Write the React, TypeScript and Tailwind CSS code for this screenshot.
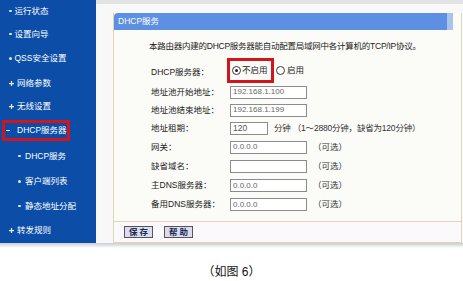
import React from "react";

const FONT = { fontFamily: '"Liberation Sans", "Noto Sans CJK SC", sans-serif' };

function Bullet({ kind }: { kind: "dot" | "plus" | "minus" | "sub" }) {
  if (kind === "plus")
    return (
      <svg width="5" height="5" viewBox="0 0 5 5" className="shrink-0">
        <rect x="0" y="2" width="5" height="1.2" fill="#e8eef8" />
        <rect x="1.9" y="0" width="1.2" height="5" fill="#e8eef8" />
      </svg>
    );
  if (kind === "minus")
    return <span className="block w-[4px] h-[1.5px] bg-white shrink-0" />;
  return <span className="block w-[2.5px] h-[2.5px] bg-[#dfe7f5] rounded-full shrink-0" />;
}

function NavItem({
  label,
  h,
  kind,
  sub,
}: {
  label: string;
  h: string;
  kind: "dot" | "plus";
  sub?: boolean;
}) {
  return (
    <div className={`flex items-center ${h} ${sub ? "pl-[18px]" : "pl-[9px]"}`}>
      <Bullet kind={kind} />
      <span className={`${sub ? "ml-[4.5px]" : "ml-[3px]"} text-[8.5px] leading-none text-white`}>{label}</span>
    </div>
  );
}

function Radio({ checked }: { checked?: boolean }) {
  return (
    <span className="w-[9px] h-[9px] rounded-full border border-[#3a3a3a] bg-white flex items-center justify-center shrink-0">
      {checked && <span className="w-[3px] h-[3px] rounded-full bg-[#222]" />}
    </span>
  );
}

function Field({ label, value, h, note }: { label: string; value: string; h: string; note?: boolean }) {
  return (
    <div className={`flex items-center ${h}`}>
      <span className="w-[79px] shrink-0 text-[8.5px] leading-none text-[#222]">{label}</span>
      <span className="w-[77px] h-[13px] border border-[#8c8c8c] bg-white pl-[2px] flex items-center text-[8px] text-[#666] leading-none shrink-0">
        {value}
      </span>
      {note && <span className="ml-[6px] text-[8.5px] leading-none text-[#333]">（可选）</span>}
    </div>
  );
}

export default function App() {
  return (
    <div className="w-[463px] h-[281px] bg-white overflow-hidden flex flex-col" style={FONT}>
      <div className="flex h-[243px] shrink-0">
        {/* Sidebar */}
        <aside className="w-[96px] bg-[#0c4ea7] flex flex-col shrink-0">
          <NavItem label="运行状态" h="h-[22px]" kind="dot" />
          <NavItem label="设置向导" h="h-[24px]" kind="dot" />
          <NavItem label="QSS安全设置" h="h-[25px]" kind="dot" />
          <NavItem label="网络参数" h="h-[24px]" kind="plus" />
          <NavItem label="无线设置" h="h-[23px]" kind="plus" />
          <div className="h-[25px] flex items-center pl-[2px]">
            <div className="h-[21px] w-[68px] border-[3px] border-[#d3141c] flex items-center pl-[1px]">
              <Bullet kind="minus" />
              <span className="ml-[7px] text-[8.5px] leading-none text-white">DHCP服务器</span>
            </div>
          </div>
          <NavItem label="DHCP服务" h="h-[26px]" kind="dot" sub />
          <NavItem label="客户端列表" h="h-[25px]" kind="dot" sub />
          <NavItem label="静态地址分配" h="h-[24px]" kind="dot" sub />
          <NavItem label="转发规则" h="h-[25px]" kind="plus" />
        </aside>

        {/* Main */}
        <div className="flex-1 flex flex-col bg-[#f8f8f8]">
          <div className="h-[4px] bg-[#e3e3e3] shrink-0" />
          <div className="flex-1 flex pl-[17px] pt-[9px] pr-[1px]">
            <div className="flex-1 flex flex-col border-l border-r border-b border-[#e2d5b3] bg-[#fbfbf8]">
              <div className="flex h-[17px] shrink-0">
                <div className="flex-1 bg-[#5d8fe2] rounded-tl-[4px] flex items-center pl-[4px] text-[8.5px] leading-none text-white">
                  DHCP服务
                </div>
                <div className="w-[6px] bg-[#a9c3ec]" />
                <div className="w-[8px]" />
              </div>
              <div className="flex-1 flex flex-col pl-[35px]">
                <div className="mt-[10px] h-[12px] flex items-center text-[8.5px] leading-none text-[#222] whitespace-nowrap tracking-[-0.25px]">
                  本路由器内建的DHCP服务器能自动配置局域网中各计算机的TCP/IP协议。
                </div>
                <div className="mt-[6px] h-[25px] flex items-center pl-[2px]">
                  <span className="w-[76px] shrink-0 text-[8.5px] leading-none text-[#222] pt-[3px]">DHCP服务器：</span>
                  <div className="h-[25px] w-[47px] border-[3px] border-[#d3141c] flex items-center pl-[2px] shrink-0">
                    <Radio checked />
                    <span className="ml-[1px] text-[8.5px] leading-none text-[#222]">不启用</span>
                  </div>
                  <span className="ml-[2px]">
                    <Radio />
                  </span>
                  <span className="ml-[2px] text-[8.5px] leading-none text-[#222]">启用</span>
                </div>
                <div className="pl-[2px] flex flex-col">
                  <Field label="地址池开始地址：" value="192.168.1.100" h="h-[18px]" />
                  <Field label="地址池结束地址：" value="192.168.1.199" h="h-[18px]" />
                  <div className="flex items-center h-[18px]">
                    <span className="w-[79px] shrink-0 text-[8.5px] leading-none text-[#222]">地址租期：</span>
                    <span className="w-[38px] h-[13px] border border-[#8c8c8c] bg-white pl-[2px] flex items-center text-[8.5px] text-[#555] leading-none shrink-0">
                      120
                    </span>
                    <span className="ml-[6px] text-[8.5px] leading-none text-[#333] whitespace-nowrap tracking-[-0.2px]">
                      分钟 （1～2880分钟，缺省为120分钟）
                    </span>
                  </div>
                  <Field label="网关：" value="0.0.0.0" h="h-[20px]" note />
                  <Field label="缺省域名：" value="" h="h-[19px]" note />
                  <Field label="主DNS服务器：" value="0.0.0.0" h="h-[19px]" note />
                  <Field label="备用DNS服务器：" value="0.0.0.0" h="h-[19px]" note />
                </div>
              </div>
              <div className="h-[21px] shrink-0 border-t border-[#e2d5b3] bg-[#fbf9fb] flex items-center pl-[10px] gap-[11px]">
                <button className="w-[29px] h-[12px] border border-[#555] bg-[#dcdcee] text-[8.5px] leading-none text-[#1a2a55] font-bold tracking-[2px] pl-[2px]">
                  保存
                </button>
                <button className="w-[29px] h-[12px] border border-[#555] bg-[#dcdcee] text-[8.5px] leading-none text-[#1a2a55] font-bold tracking-[2px] pl-[2px]">
                  帮助
                </button>
              </div>
            </div>
          </div>
        </div>
      </div>
      <div className="h-[5px] shrink-0 bg-gradient-to-b from-[#c8ccd4] to-white" />
      <div className="flex justify-center pt-[18px]">
        <span className="text-[12px] leading-none text-[#111]">（如图 6）</span>
      </div>
    </div>
  );
}
